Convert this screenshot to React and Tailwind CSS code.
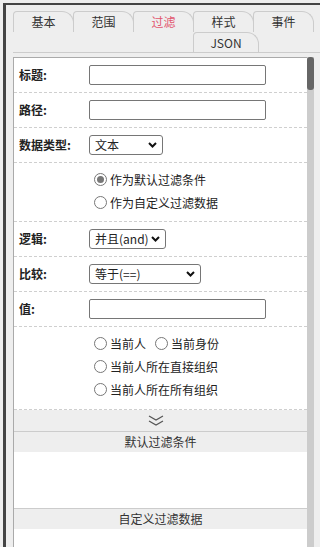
import React from "react";

function Chevron() {
  return (
    <svg width="9" height="6" viewBox="0 0 9 6" className="shrink-0">
      <polyline points="1,1 4.5,4.5 8,1" fill="none" stroke="#111" strokeWidth="2" />
    </svg>
  );
}

function Select({ value, w }) {
  return (
    <div className={`flex items-center justify-between h-[20px] border border-[#767676] rounded-[3px] bg-white pl-[5px] pr-[5px] ${w}`}>
      <span className="leading-none">{value}</span>
      <Chevron />
    </div>
  );
}

function Input() {
  return <div className="w-[177px] h-[20px] border border-[#767676] rounded-[2px] bg-white" />;
}

function Radio({ checked, label }) {
  return (
    <div className="flex items-center h-[23px]">
      <span className="w-[13px] h-[13px] rounded-full border border-[#777] bg-white flex items-center justify-center">
        {checked && <span className="w-[7px] h-[7px] rounded-full bg-[#777]" />}
      </span>
      <span className="ml-[3px]">{label}</span>
    </div>
  );
}

function Row({ label, children }) {
  return (
    <div className="flex items-center h-[35px] border-b border-dashed border-[#cfcfcf]">
      <div className="w-[75px] pl-[5px] font-bold">{label}</div>
      {children}
    </div>
  );
}

function Tab({ label, active, w = "w-[61px]" }) {
  return (
    <div
      className={`${w} h-[21px] -mr-px border-l border-t border-r border-[#cccccc] rounded-tl-[4px] rounded-tr-[12px] flex items-center justify-center ${
        active ? "text-[#e2566f]" : "text-[#333]"
      }`}
    >
      {label}
    </div>
  );
}

export default function App() {
  return (
    <div className="w-[320px] h-[547px] bg-[#eeeeee] pt-[3px] pl-[3px] overflow-hidden text-[12px] text-[#222] font-['Noto_Sans_CJK_SC','Microsoft_YaHei',sans-serif]">
      <div className="h-full border-l-[3px] border-t-2 border-[#444] pl-[7px] pt-[6px] flex flex-col">
        <div className="border-b border-[#cccccc]">
          <div className="flex">
            <Tab label="基本" />
            <Tab label="范围" />
            <Tab label="过滤" active />
            <Tab label="样式" />
            <Tab label="事件" />
          </div>
          <div className="flex pl-[180px]">
            <div className="w-[66px] h-[20px] border-l border-t border-r border-[#cccccc] rounded-tl-[4px] rounded-tr-[12px] flex items-center justify-center text-[#333]">
              JSON
            </div>
          </div>
        </div>
        <div className="flex flex-1 min-h-0 mt-[4px]">
          <div className="w-[294px] bg-white border-l border-t border-[#aaaaaa] flex flex-col">
            <Row label="标题:">
              <Input />
            </Row>
            <Row label="路径:">
              <Input />
            </Row>
            <Row label="数据类型:">
              <Select value="文本" w="w-[74px]" />
            </Row>
            <div className="h-[59px] pt-[5px] pl-[80px] border-b border-dashed border-[#cfcfcf]">
              <Radio checked label="作为默认过滤条件" />
              <Radio label="作为自定义过滤数据" />
            </div>
            <Row label="逻辑:">
              <Select value="并且(and)" w="w-[77px]" />
            </Row>
            <Row label="比较:">
              <Select value="等于(==)" w="w-[112px]" />
            </Row>
            <Row label="值:">
              <Input />
            </Row>
            <div className="h-[83px] pt-[5px] pl-[80px] border-b border-dashed border-[#cfcfcf]">
              <div className="flex gap-[9px]">
                <Radio label="当前人" />
                <Radio label="当前身份" />
              </div>
              <Radio label="当前人所在直接组织" />
              <Radio label="当前人所在所有组织" />
            </div>
            <div className="h-[22px] bg-[#eeeeee] border-b border-[#cccccc] flex items-center justify-center pr-[9px]">
              <svg width="16" height="12" viewBox="0 0 16 12">
                <polyline points="1,1 8,5 15,1" fill="none" stroke="#555" strokeWidth="1.2" />
                <polyline points="1,6 8,10 15,6" fill="none" stroke="#555" strokeWidth="1.2" />
              </svg>
            </div>
            <div className="h-[20px] bg-[#eeeeee] flex items-center justify-center text-[#333]">默认过滤条件</div>
            <div className="h-[57px] bg-white border-b border-[#cccccc]" />
            <div className="h-[20px] bg-[#eeeeee] flex items-center justify-center text-[#333]">自定义过滤数据</div>
            <div className="flex-1 bg-white" />
          </div>
          <div className="w-[7px] bg-[#cccccc]">
            <div className="h-[33px] bg-[#666] rounded-[3px]" />
          </div>
        </div>
      </div>
    </div>
  );
}
